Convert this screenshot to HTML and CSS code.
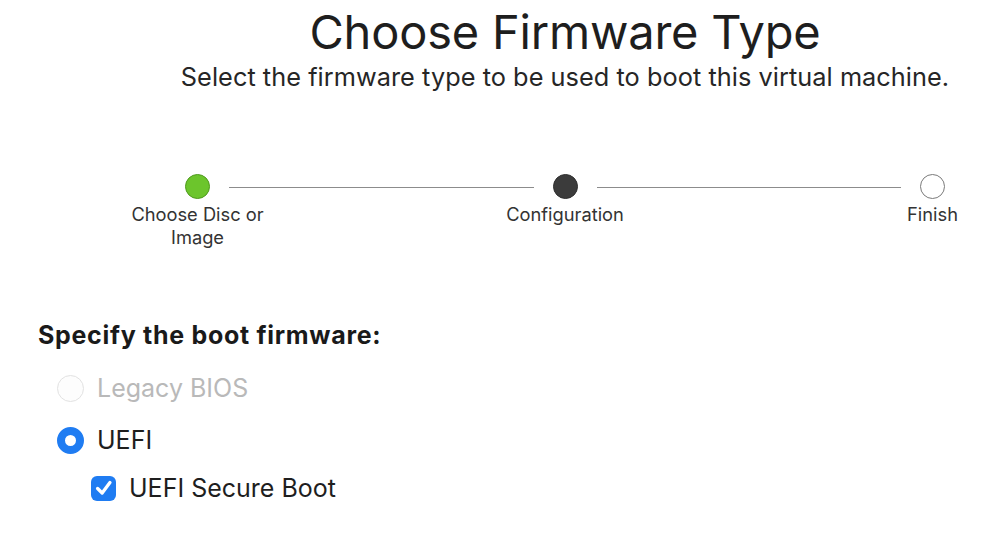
FILE: index.html
```html
<!DOCTYPE html>
<html>
<head>
<meta charset="utf-8">
<link rel="stylesheet" href="styles.css">
</head>
<body>
<div class="page">
  <header class="head">
    <h1 class="title">Choose Firmware Type</h1>
    <p class="subtitle">Select the firmware type to be used to boot this virtual machine.</p>
    <div class="stepper">
      <div class="step">
        <span class="dot dot-done"></span>
        <span class="label">Choose Disc or<br>Image</span>
      </div>
      <span class="line"></span>
      <div class="step">
        <span class="dot dot-current"></span>
        <span class="label">Configuration</span>
      </div>
      <span class="line"></span>
      <div class="step">
        <span class="dot dot-todo"></span>
        <span class="label">Finish</span>
      </div>
    </div>
  </header>
  <section class="form">
    <h2 class="form-title">Specify the boot firmware:</h2>
    <div class="option disabled">
      <span class="radio"></span>
      <span class="opt-text">Legacy BIOS</span>
    </div>
    <div class="option">
      <span class="radio radio-on"></span>
      <span class="opt-text">UEFI</span>
    </div>
    <div class="option sub">
      <span class="check">
        <svg viewBox="0 0 24 24" width="22" height="22"><path d="M5 12.5 L10 17.5 L18.5 6" fill="none" stroke="#fff" stroke-width="3.6" stroke-linecap="round" stroke-linejoin="round"/></svg>
      </span>
      <span class="opt-text">UEFI Secure Boot</span>
    </div>
  </section>
</div>
</body>
</html>
```

FILE: styles.css
```css
html, body {
  margin: 0;
  padding: 0;
  background: #ffffff;
}
body {
  font-family: Inter, "Liberation Sans", sans-serif;
  color: #1f1f1f;
  width: 1008px;
  height: 548px;
  overflow: hidden;
}
.page {
  display: flex;
  flex-direction: column;
}
.head {
  margin-left: 122px;
  display: flex;
  flex-direction: column;
  align-items: center;
}
.title {
  margin: 0;
  padding-top: 4px;
  font-size: 47px;
  font-weight: 400;
  line-height: 56px;
  letter-spacing: -0.2px;
  color: #1e1e1e;
}
.subtitle {
  margin: 2px 0 0;
  font-size: 25.3px;
  line-height: 30px;
  letter-spacing: 0.05px;
  color: #262626;
  white-space: nowrap;
}
.stepper {
  margin-top: 82px;
  width: 760px;
  display: flex;
  align-items: flex-start;
}
.step {
  width: 25px;
  display: flex;
  flex-direction: column;
  align-items: center;
}
.dot {
  width: 25px;
  height: 25px;
  box-sizing: border-box;
  border-radius: 50%;
}
.dot-done {
  background: #6cc52c;
  border: 1px solid #4f9a1d;
}
.dot-current {
  background: #3b3b3b;
  border: 1px solid #2e2e2e;
}
.dot-todo {
  background: #ffffff;
  border: 1.5px solid #7a7a7a;
}
.label {
  width: 170px;
  margin-top: 4px;
  text-align: center;
  font-size: 18.3px;
  line-height: 23px;
  color: #333333;
}
.line {
  flex: 1;
  height: 1px;
  margin: 13px 19px 0;
  background: #8c8c8c;
}
.form {
  margin-top: 72px;
  padding-left: 38px;
  display: flex;
  flex-direction: column;
}
.form-title {
  margin: 0 0 13px;
  font-size: 25px;
  font-weight: 700;
  line-height: 28px;
  letter-spacing: 0.7px;
  color: #1a1a1a;
}
.option {
  display: flex;
  align-items: center;
  gap: 13px;
  height: 52px;
  padding-left: 19px;
}
.option.sub {
  padding-left: 53px;
  gap: 13px;
  height: 44px;
}
.opt-text {
  font-size: 25px;
  color: #1e1e1e;
}
.disabled .opt-text {
  color: #b9b9b9;
}
.radio {
  width: 27px;
  height: 27px;
  box-sizing: border-box;
  border-radius: 50%;
  border: 1.5px solid #e2e2e2;
  background: #fdfdfd;
}
.radio-on {
  border: 8.5px solid #1f7cf2;
  background: #ffffff;
}
.check {
  width: 25px;
  height: 25px;
  border-radius: 6px;
  background: #1f7cf2;
  display: flex;
  align-items: center;
  justify-content: center;
}
```
